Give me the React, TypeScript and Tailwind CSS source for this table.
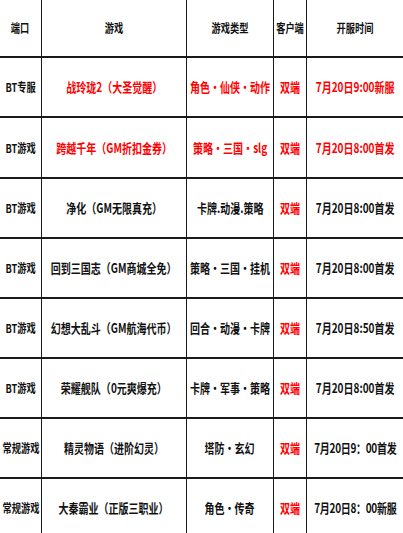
const RED = 'text-[#ff0000]'

type Row = {
  port: string
  game: string
  kind: string
  time: string
  hot?: boolean
}

const ROWS: Row[] = [
  { port: 'BT专服', game: '战玲珑2（大圣觉醒）', kind: '角色·仙侠·动作', time: '7月20日9:00新服', hot: true },
  { port: 'BT游戏', game: '跨越千年（GM折扣金券）', kind: '策略·三国·slg', time: '7月20日8:00首发', hot: true },
  { port: 'BT游戏', game: '净化（GM无限真充）', kind: '卡牌.动漫.策略', time: '7月20日8:00首发' },
  { port: 'BT游戏', game: '回到三国志（GM商城全免）', kind: '策略·三国·挂机', time: '7月20日8:00首发' },
  { port: 'BT游戏', game: '幻想大乱斗（GM航海代币）', kind: '回合·动漫·卡牌', time: '7月20日8:50首发' },
  { port: 'BT游戏', game: '荣耀舰队（0元爽爆充）', kind: '卡牌·军事·策略', time: '7月20日8:00首发' },
  { port: '常规游戏', game: '精灵物语（进阶幻灵）', kind: '塔防•玄幻', time: '7月20日9：00首发' },
  { port: '常规游戏', game: '大秦霸业（正版三职业）', kind: '角色•传奇', time: '7月20日8：00新服' },
]

const COLS = [
  'w-[42px] border-r-[1.5px]',
  'w-[145px] border-r-[1.5px]',
  'w-[87px] border-r-[1.5px]',
  'w-[33px] border-r-[1.5px]',
  'flex-1',
]

function Cell({ col, children, className = '' }: { col: number; children: React.ReactNode; className?: string }) {
  return (
    <div className={`flex h-full min-w-0 shrink-0 items-center justify-center border-[#1a1a1a] ${COLS[col]}`}>
      <span className={`inline-block shrink-0 whitespace-nowrap [transform:scaleX(0.77)] ${className}`}>{children}</span>
    </div>
  )
}

export default function App() {
  return (
    <div
      className="h-[533px] w-[403px] overflow-hidden bg-white font-bold text-[#111]"
      style={{ fontFamily: '"Noto Sans CJK SC", "Noto Sans", sans-serif' }}
    >
      <div className="flex h-[58px] border-b-2 border-[#1a1a1a] text-[12px]">
        <Cell col={0}>端口</Cell>
        <Cell col={1}>游戏</Cell>
        <Cell col={2}>游戏类型</Cell>
        <Cell col={3}>客户端</Cell>
        <Cell col={4}>开服时间</Cell>
      </div>
      {ROWS.map((r, i) => (
        <div
          key={i}
          className={`flex border-b-2 border-[#1a1a1a] text-[13px] ${i === 1 ? 'h-[61px]' : 'h-[60px]'}`}
        >
          <Cell col={0} className="text-[12px]">{r.port}</Cell>
          <Cell col={1} className={r.hot ? RED : ''}>{r.game}</Cell>
          <Cell col={2} className={r.hot ? RED : ''}>{r.kind}</Cell>
          <Cell col={3} className={RED}>双端</Cell>
          <Cell col={4} className={r.hot ? RED : i > 5 ? 'tracking-[-0.4px]' : ''}>{r.time}</Cell>
        </div>
      ))}
    </div>
  )
}
